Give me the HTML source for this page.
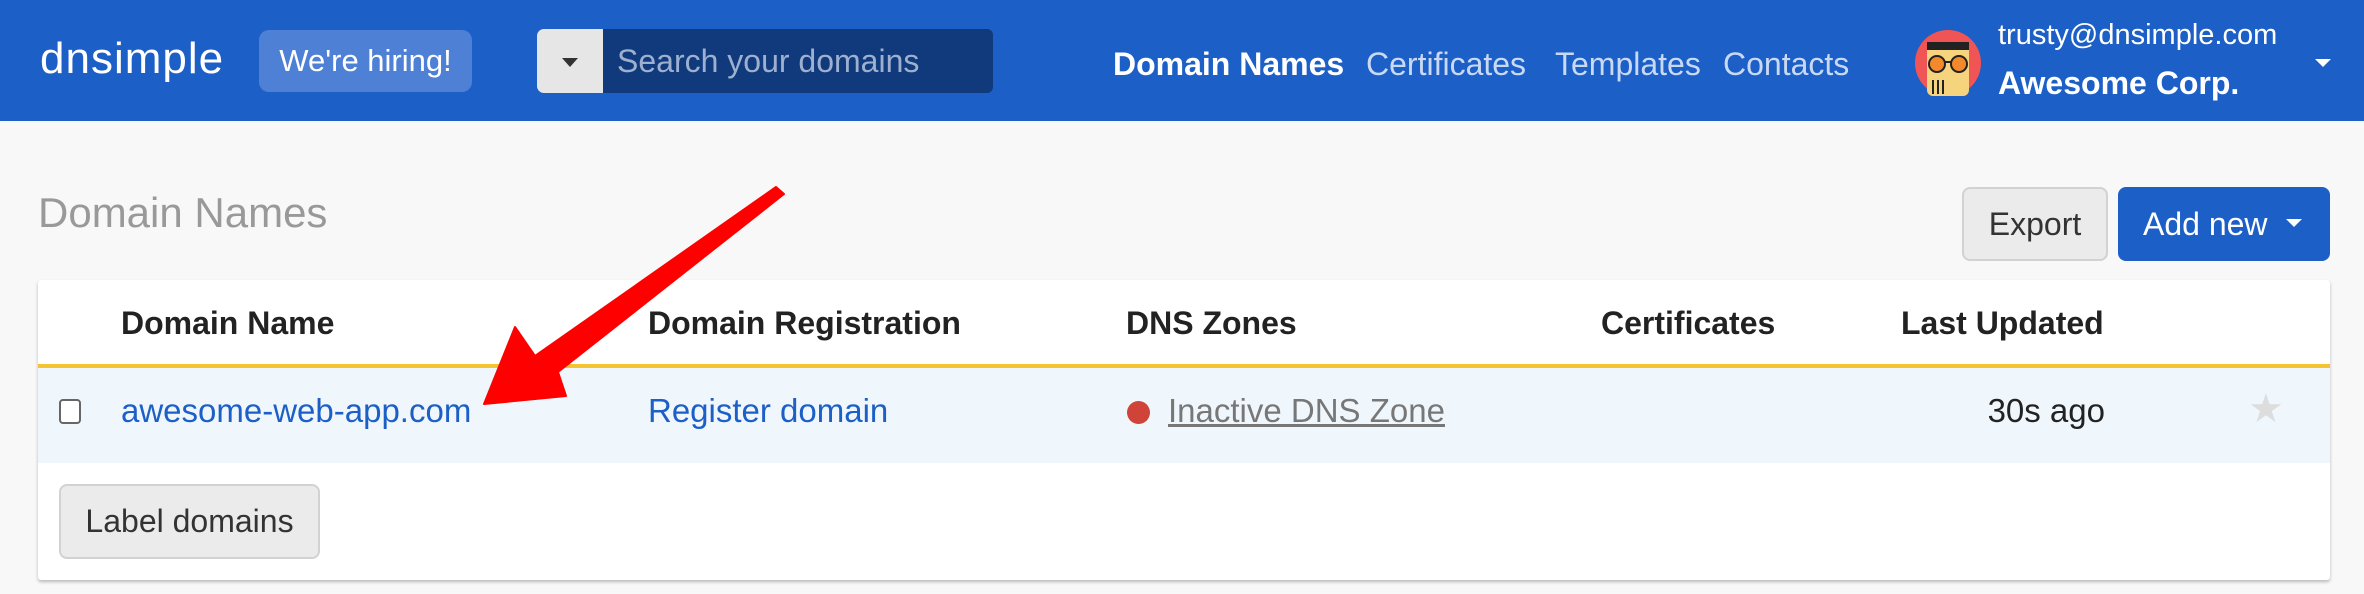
<!DOCTYPE html>
<html><head><meta charset="utf-8"><style>
*{box-sizing:border-box;margin:0;padding:0}
body{width:2364px;height:594px;background:#f8f8f8;font-family:"Liberation Sans",sans-serif;position:relative;overflow:hidden}
.a{position:absolute;white-space:nowrap}
.hdr{position:absolute;left:0;top:0;width:2364px;height:121px;background:#1c5fc7}
.nav{font-size:32px;color:#c9d9f3;top:46px}
.th{font-size:32px;font-weight:bold;color:#222;top:305px}
.td{font-size:33px;top:392px}
</style></head><body>
<div class="hdr"></div>
<div class="a" style="left:40px;top:34px;font-size:44px;color:#fff;letter-spacing:1px">dnsimple</div>
<div class="a" style="left:259px;top:30px;width:213px;height:62px;background:#4e80d6;border-radius:10px;color:#fff;font-size:31px;text-align:center;line-height:62px">We're hiring!</div>
<div class="a" style="left:537px;top:29px;width:68px;height:64px;background:#e6e6e6;border-radius:7px 0 0 7px"></div>
<div class="a" style="left:562px;top:58px;width:0;height:0;border-left:8px solid transparent;border-right:8px solid transparent;border-top:9px solid #333"></div>
<div class="a" style="left:603px;top:29px;width:390px;height:64px;background:#113a7c;border-radius:0 6px 6px 0;color:#9db0cf;font-size:32px;line-height:64px;padding-left:14px">Search your domains</div>
<div class="a nav" style="left:1113px;color:#fff;font-weight:bold">Domain Names</div>
<div class="a nav" style="left:1366px">Certificates</div>
<div class="a nav" style="left:1555px">Templates</div>
<div class="a nav" style="left:1723px">Contacts</div>
<svg class="a" style="left:1915px;top:30px" width="66" height="66" viewBox="0 0 66 66">
<circle cx="33" cy="33" r="33" fill="#f05454"/>
<rect x="12" y="14" width="42" height="52" rx="6" fill="#f6d47e"/>
<rect x="12" y="12" width="42" height="8" fill="#222"/>
<circle cx="22" cy="34" r="8" fill="#f28a2c" stroke="#222" stroke-width="2"/>
<circle cx="44" cy="34" r="8" fill="#f28a2c" stroke="#222" stroke-width="2"/>
<line x1="30" y1="32" x2="36" y2="32" stroke="#222" stroke-width="2"/>
<path d="M18 50v14M23 50v14M28 50v14" stroke="#222" stroke-width="2"/>
</svg>
<div class="a" style="left:1998px;top:19px;font-size:29px;color:#fff">trusty@dnsimple.com</div>
<div class="a" style="left:1998px;top:65px;font-size:32px;color:#fff;font-weight:bold">Awesome Corp.</div>
<div class="a" style="left:2315px;top:59px;border-left:8px solid transparent;border-right:8px solid transparent;border-top:8px solid #fff"></div>

<div class="a" style="left:38px;top:189px;font-size:42px;color:#999">Domain Names</div>
<div class="a" style="left:1962px;top:187px;width:146px;height:74px;background:#ebebeb;border:2px solid #d2d2d2;border-radius:8px;font-size:32px;color:#333;text-align:center;line-height:70px">Export</div>
<div class="a" style="left:2118px;top:187px;width:212px;height:74px;background:#1c5fc7;border-radius:8px;font-size:32px;color:#fff;line-height:74px;padding-left:25px">Add new</div>
<div class="a" style="left:2286px;top:219px;border-left:8px solid transparent;border-right:8px solid transparent;border-top:8px solid #fff"></div>

<div class="a" style="left:38px;top:280px;width:2292px;height:300px;background:#fff;box-shadow:0 2px 3px rgba(0,0,0,.25);border-radius:3px"></div>
<div class="a th" style="left:121px">Domain Name</div>
<div class="a th" style="left:648px">Domain Registration</div>
<div class="a th" style="left:1126px">DNS Zones</div>
<div class="a th" style="left:1601px">Certificates</div>
<div class="a th" style="left:1901px">Last Updated</div>
<div class="a" style="left:38px;top:364px;width:2292px;height:4px;background:#f5c432"></div>
<div class="a" style="left:38px;top:368px;width:2292px;height:95px;background:#f0f7fc"></div>
<div class="a" style="left:59px;top:399px;width:22px;height:25px;border:2px solid #666;border-radius:4px;background:#fff"></div>
<div class="a td" style="left:121px;color:#1c5fc7">awesome-web-app.com</div>
<div class="a td" style="left:648px;color:#1c5fc7">Register domain</div>
<div class="a" style="left:1127px;top:401px;width:23px;height:23px;border-radius:50%;background:#cf4338"></div>
<div class="a td" style="left:1168px;color:#777;text-decoration:underline">Inactive DNS Zone</div>
<div class="a td" style="left:1960px;width:145px;text-align:right;color:#222">30s ago</div>
<div class="a" style="left:2248px;top:386px;font-size:40px;color:#ddd">★</div>
<div class="a" style="left:59px;top:484px;width:261px;height:75px;background:#ebebeb;border:2px solid #d2d2d2;border-radius:8px;font-size:32px;color:#333;text-align:center;line-height:71px">Label domains</div>

<svg class="a" style="left:0;top:0" width="2364" height="594">
<polygon points="776,187 784,194 558,372 566,396 484,404 515,327 535,356" fill="#ff0000" stroke="#ff0000" stroke-width="2" stroke-linejoin="round"/>
</svg>
</body></html>
